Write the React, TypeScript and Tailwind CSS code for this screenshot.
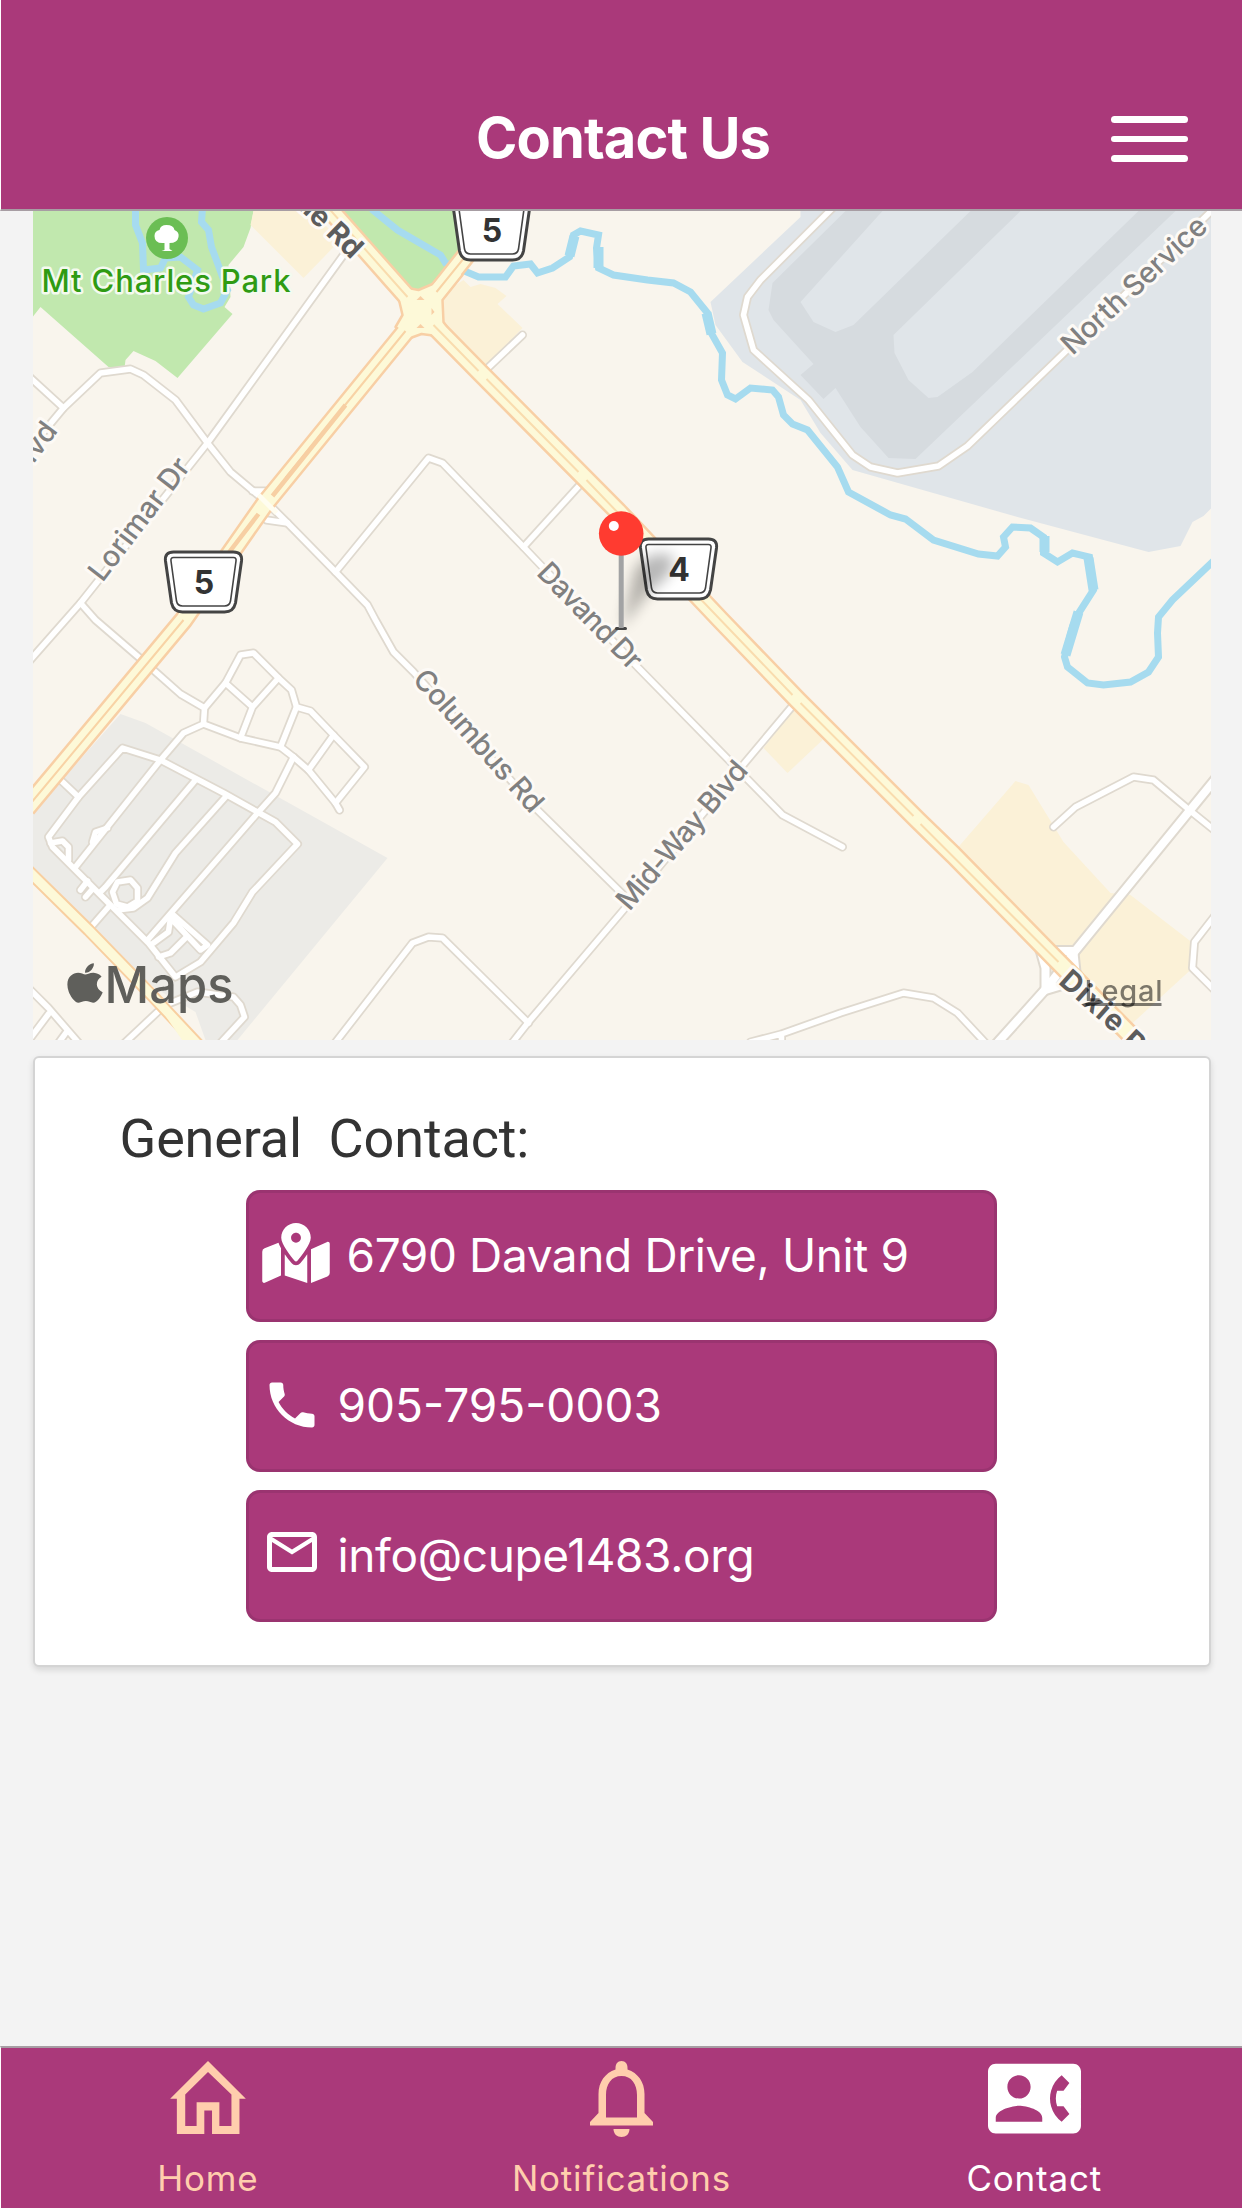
import React from "react";
import { FaApple, FaMapMarkedAlt } from "react-icons/fa";
import { MdContactPhone, MdMailOutline, MdPhone } from "react-icons/md";

const streets = [
  "M343 255L207 443L80 603L28 662",
  "M28 376L63 408",
  "M28 450L63 408L100 373L130 369L143 375L175 400L207 443L230 472L267 503L287 523L335 572L367 605L375 620L393 652L413 672L537 810L623 895",
  "M252 491L272 491",
  "M266 520L287 523",
  "M335 572L428 458L442 463L523 547L638 668L738 770L782 815L842 847",
  "M523 547L582 482",
  "M482 373L522 335",
  "M797 700L740 768L623 910L528 1022L510 1045",
  "M333 1045L412 943L428 937L442 938L528 1023",
  "M80 603L95 620L145 663L180 694L204 708L203 724L183 733L160 760L75 867",
  "M204 708L225 683L240 655L253 653L278 678L291 690L296 707L310 711L333 735L364 767L335 803L339 810",
  "M203 724L240 738L280 747L293 757L308 770L335 803",
  "M225 683L252 707L240 738M252 707L278 678M296 707L280 747M333 735L308 770",
  "M293 757L275 793L258 812L173 910L147 940",
  "M48 837L78 797L122 748L160 760L223 793L257 812L275 822L297 844L252 892L233 923L200 962L175 977L148 943L100 895L52 847Z",
  "M60 780L78 797",
  "M195 780L105 887L100 892",
  "M225 797L175 853L147 898L133 908L117 910",
  "M117 882L130 880L137 888L137 901L127 907L116 904L112 892Z",
  "M108 907L88 930",
  "M50 843L62 841L68 847L68 860",
  "M92 842L95 832L107 828",
  "M80 890L87 881M85 897L92 889",
  "M173 915L207 945L200 950L170 918L168 932L153 943",
  "M185 938L170 953L158 957",
  "M170 1003L197 992L233 997L240 1005L244 1017L220 1043",
  "M123 1044L157 1012",
  "M28 988L48 1008L80 1045M30 1038L48 1014M58 1043L66 1032",
  "M750 1042L781 1034L840 1013L903 993L933 998L957 1013L985 1043M781 1034L781 1045",
  "M832 208L760 280L747 297L743 315L753 350L808 400L852 455L870 467L897 473L938 466L967 446L1213 209",
  "M1053 827L1075 807L1133 777L1153 780L1190 811L1215 831",
  "M1215 915L1194 942L1192 968L1215 991",
];

const avenues = [
  "M995 1045L1047 987L1073 953L1215 779",
  "M1040 951L1073 951M1040 950L1045 968L1045 990L1065 984",
  "M1073 953L1075 972L1083 985",
];

const highways = [
  "M26 808L183 620L265 503L420 313L500 212",
  "M328 208L420 312L480 373L617 511L720 620L797 700L917 820L953 855L1053 957L1140 1045",
];

const Label = ({
  x,
  y,
  r,
  len,
  children,
  bold = false,
  anchor = "start",
}: {
  x: number;
  y: number;
  r: number;
  len?: number;
  children: string;
  bold?: boolean;
  anchor?: "start" | "end";
}) => (
  <text
    transform={`translate(${x} ${y}) rotate(${r})`}
    textLength={len}
    textAnchor={anchor}
    fontSize={29}
    fontWeight={bold ? 700 : 450}
    fill={bold ? "#5c5c5c" : "#808080"}
    stroke="#fdfaf6"
    strokeWidth={6}
    strokeLinejoin="round"
    paintOrder="stroke"
  >
    {children}
  </text>
);

const Shield = ({ x, y, n }: { x: number; y: number; n: string }) => (
  <g transform={`translate(${x} ${y})`}>
    <path
      d="M-30 -30H30Q39 -30 38 -21L32 21Q30 30 21 30H-21Q-30 30 -32 21L-38 -21Q-39 -30 -30 -30Z"
      fill="#fff"
      stroke="#444"
      strokeWidth="3"
    />
    <path
      d="M-30 -24.500H30Q33 -24.500 32.500 -21L27 19Q26 24 21 24H-21Q-26 24 -27 19L-32.500 -21Q-33 -24.500 -30 -24.500Z"
      fill="none"
      stroke="#444"
      strokeWidth="1.6"
    />
    <text x="0.500" y="11.500" textAnchor="middle" fontSize="32" fontWeight="700" fill="#333">
      {n}
    </text>
  </g>
);

function MapView() {
  return (
    <svg
      className="block h-[829px] w-[1178px] shrink-0 font-['Inter',sans-serif]"
      viewBox="32.5 211 1178 829"
    >
      <defs>
        <filter id="pinShadow" x="-50%" y="-50%" width="200%" height="200%">
          <feGaussianBlur stdDeviation="7" />
        </filter>
      </defs>
      <rect x="32" y="211" width="1180" height="829" fill="#f9f5ed" />

      {/* parks */}
      <g fill="#c1e8ae">
        <path d="M32 211H253L250 228L243 247L228 265L230 297L224 307L232 314L177 378L155 361L133 351L125 360L124 368L108 367L40 307L32 317Z" />
        <path d="M335 205L408 288L418 290L435 283L465 245V205Z" />
      </g>

      {/* commercial blocks */}
      <g fill="#fbf1d7">
        <path d="M253 211L250 225L303 278L340 240L310 211Z" />
        <path d="M463 280L470 287L480 284L495 288L506 296L497 304L522 328L485 367L440 325L440 295Z" />
        <path d="M797 705L763 748L787 773L822 740Z" />
        <path d="M1015 781L1028 785L1063 842L1110 893L1130 895L1191 942L1190 970L1130 1025L1053 948L957 848Z" />
      </g>
      <path d="M120 714L145 723L387 858L237 1040H205L195 1012L153 987L32 870V813Z" fill="#ecebe7" />

      {/* airport */}
      <path
        d="M800 211V217L710 302L715 325L742 362L800 400L820 433L852 470L1017 517L1148 552L1180 546L1192 522L1203 516L1211 508V211Z"
        fill="#e0e5e9"
      />
      <path
        fillRule="evenodd"
        fill="#d6dbdf"
        d="M845 211L772 283L768 310L773 320L813 364L800 375L823 399L835 388L860 427L888 458L915 459L1175 211ZM882 211L800 302L813 322L835 332L853 325L970 211ZM1020 211L893 335L894 353L908 380L928 398L937 397L972 372L1138 211Z"
      />

      {/* water */}
      <g fill="none" stroke="#a6dbef" strokeWidth="7">
        <path d="M135 208L135 225L142 243L143 270L160 268L165 258L180 257L197 270L188 297L193 305L203 309L220 303L227 290L217 263L211 247L208 230L201 222L202 208" />
        <path d="M371 209L397 230L440 255L445 263L478 277L505 277L513 266L530 264L537 273L552 268L569 257L573 235L580 231L598 235L596 248L598 268L613 275L647 280L673 283L690 292L707 313L709 330L722 353L721 380L727 395L735 399L750 388L772 390L778 397L783 415L792 424L807 430L837 467L848 492L890 515L905 519L933 540L978 554L997 556L1005 547L1003 537L1012 527L1030 528L1043 537L1043 553L1057 562L1072 553L1089 557L1093 590L1077 615L1072 627L1064 657L1067 667L1087 683L1103 685L1130 682L1148 672L1158 657L1157 633L1158 617L1172 600L1214 560" />
        <path d="M574 236L569 256M598 247L598 268M706 313L711 334M1088 558L1093 590M1078 612L1065 655M1044 536V552" strokeWidth="10" />
      </g>

      {/* streets */}
      <g fill="none" strokeLinejoin="round" strokeLinecap="round">
        <g stroke="#dfd9cf" strokeWidth="9">
          {streets.map((d) => (
            <path key={d} d={d} />
          ))}
        </g>
        <g stroke="#dfd9cf" strokeWidth="12">
          {avenues.map((d) => (
            <path key={d} d={d} />
          ))}
        </g>
        <g stroke="#fff" strokeWidth="5.500">
          {streets.map((d) => (
            <path key={d} d={d} />
          ))}
        </g>
        <g stroke="#fff" strokeWidth="8">
          {avenues.map((d) => (
            <path key={d} d={d} />
          ))}
        </g>
      </g>

      {/* highways */}
      <g fill="none" strokeLinejoin="round">
        <path d="M26 869L88 930L153 997L198 1045" stroke="#f8cfa0" strokeWidth="13" />
        <path d="M26 869L88 930L153 997L198 1045" stroke="#fdf9d8" strokeWidth="9" />
        <path d="M150 994L185 1045L200 1045Z" fill="#fdf9d8" />
        <g stroke="#f8cfa5" strokeWidth="20">
          {highways.map((d) => (
            <path key={d} d={d} />
          ))}
        </g>
        <path
          d="M397 278L408 288L418 290L432 284L455 258L462 275L442 300L443 322L452 335L436 336L421 334L410 338L395 327L402 315L398 298L382 282Z"
          stroke="#f8cfa5"
          strokeWidth="2.500"
          fill="#fdf9d8"
        />
        <g stroke="#fdf9d8" strokeWidth="15">
          {highways.map((d) => (
            <path key={d} d={d} />
          ))}
        </g>
        <path d="M28 806L183 620M285 478L405 331M436 292L470 250" stroke="#f8d3a5" strokeWidth="2" />
        <path d="M215 570L258 514M272 496L345 405" stroke="#f7cfa3" strokeWidth="4.500" />
        <path d="M328 208L407 297M433 325L478 371M486 379L578 472M586 480L792 695M800 703L913 816M920 824L1058 962" stroke="#f9dcae" strokeWidth="2" />
        <path d="M416 300L420 296L424 300ZM416 328L420 324L424 328ZM431 308L434 312L431 315Z" fill="#f8cfa5" />
        <path d="M258 495L276 513" stroke="#fffdf0" strokeWidth="5" />
      </g>

      {/* street names */}
      <Label x={102} y={583} r={-52.5} len={146}>Lorimar Dr</Label>
      <Label x={535} y={574} r={45.8} len={136}>Davand Dr</Label>
      <Label x={411} y={680} r={48.4} len={180}>Columbus Rd</Label>
      <Label x={629} y={912} r={-49.6} len={185}>Mid-Way Blvd</Label>
      <Label x={1072} y={356} r={-43} len={187}>North Service</Label>
      <Label x={58} y={431} r={-53} anchor="end">Blvd</Label>
      <Label x={351} y={260} r={44} anchor="end" bold>Dixie Rd</Label>
      <Label x={1057} y={983} r={41.5} len={76} bold>Dixie</Label>
      <Label x={1120} y={1043} r={43} bold>Rd</Label>

      {/* park marker */}
      <circle cx="166.500" cy="238" r="21" fill="#6bbe54" />
      <path
        d="M164 250V243Q154 244 154 236Q154 231 159 230Q160 225 166 225Q173 225 174 230Q179 232 178 237Q177 243 169 243V249L172 251H161Z"
        fill="#fff"
      />
      <text
        x="41"
        y="291.500"
        textLength="249"
        fontSize="31"
        fontWeight="550"
        fill="#2f9b13"
        stroke="#f4faef"
        strokeWidth="5"
        strokeLinejoin="round"
        paintOrder="stroke"
      >
        Mt Charles Park
      </text>

      <Shield x={203} y={582} n="5" />
      <Shield x={491} y={230} n="5" />
      <Shield x={678} y={569} n="4" />

      {/* pin */}
      <path d="M621 628L634 570Q650 548 672 556Q676 575 650 590Z" fill="#000" opacity=".28" filter="url(#pinShadow)" />
      <path d="M616 628.500H625" stroke="#444" strokeWidth="3" strokeLinecap="round" />
      <rect x="618.200" y="550" width="5" height="78" fill="#a2a3a4" />
      <circle cx="620.700" cy="533.500" r="22.300" fill="#ff3b30" />
      <circle cx="613.300" cy="526" r="5" fill="#fff" />

      {/* attribution */}
      <g transform="translate(66.5 960.5)">
        <FaApple size={45} color="#5f5f5b" preserveAspectRatio="none" style={{ width: 36 }} />
      </g>
      <text
        x="104"
        y="1003"
        textLength="129"
        lengthAdjust="spacingAndGlyphs"
        fontSize="51"
        fontWeight="500"
        fill="#5f5f5b"
      >
        Maps
      </text>
      <text x="1084" y="1001" textLength="78" fontSize="29" fontWeight="550" fill="#000" opacity=".5">
        Legal
      </text>
      <path d="M1085 1004.500H1161" stroke="#000" opacity=".5" strokeWidth="3" />
    </svg>
  );
}

function ContactButton({
  icon,
  children,
  gap,
  text,
}: {
  icon: React.ReactNode;
  children: string;
  gap: string;
  text: string;
}) {
  return (
    <button
      className={`flex h-[132px] w-[751px] items-center rounded-[14px] border-[3px] border-[#9a3470] bg-[#aa397a] pl-[13px] text-[46px] leading-none text-white ${gap}`}
    >
      {icon}
      <span className={`-mt-[2px] whitespace-nowrap ${text}`}>{children}</span>
    </button>
  );
}

const HomeIcon = () => (
  <svg className="h-[73px] w-[76px]" viewBox="510 93 226 218" fill="#ffcead">
    <path d="M623 93L736 206H717V311H635V241H612V311H530V206H510ZM623 126L555 193V287H589V216H657V287H693V193Z" />
  </svg>
);

const BellIcon = () => (
  <svg className="h-[76px] w-[63px]" viewBox="0 0 63 76" fill="#ffcead">
    <path
      fillRule="evenodd"
      d="M31.500 0C35.500 0 37.500 3 37.500 7V8.500C48 12 54.500 21 54.500 33V52L63 61V64.500H0V61L8.500 52V33C8.500 21 15 12 25.500 8.500V7C25.500 3 27.500 0 31.500 0ZM31.500 15C21.500 15 16 23 16 34V56.500H47V34C47 23 41.500 15 31.500 15Z"
    />
    <path d="M23.500 68H39.500C39.500 73 36 76 31.500 76S23.500 73 23.500 68Z" />
  </svg>
);

export default function App() {
  return (
    <div className="flex h-[2208px] w-[1242px] flex-col overflow-hidden bg-[#f3f3f3] font-['Inter',sans-serif]">
      <header className="relative flex h-[211px] shrink-0 items-end justify-center border-b-2 border-l border-b-[#a79da3] border-l-white bg-[#aa397a] pb-[37px] pl-[3px]">
        <h1 className="text-[56px] leading-[68px] font-bold tracking-[-0.9px] text-white">Contact Us</h1>
        <button className="absolute top-[116px] right-[54px] flex w-[77px] flex-col gap-[13px]" aria-label="Menu">
          <span className="h-[6.5px] rounded-full bg-white" />
          <span className="h-[6.5px] rounded-full bg-white" />
          <span className="h-[6.5px] rounded-full bg-white" />
        </button>
      </header>

      <main className="flex flex-1 flex-col pl-[32.5px]">
        <MapView />
        <section className="mt-4 flex h-[611px] w-[1178px] flex-col items-center rounded-[6px] border-2 border-[#d4d4d4] bg-white pt-[48px] shadow-[0_3px_6px_rgba(0,0,0,0.12)]">
          <h2 className="w-full pl-[85px] font-['Roboto',sans-serif] text-[54px] leading-[66px] tracking-[-0.15px] whitespace-pre text-[#333]">
            General{"  "}Contact:
          </h2>
          <div className="mt-[18px] mr-[1px] flex flex-col gap-[18px]">
            <ContactButton
              gap="gap-[17px]"
              text="tracking-[-0.4px]"
              icon={<FaMapMarkedAlt className="-mt-[6px] h-[60px] w-[68px]" />}
            >
              6790 Davand Drive, Unit 9
            </ContactButton>
            <ContactButton gap="gap-4" text="tracking-normal" icon={<MdPhone className="-mt-[3px] size-[60px]" />}>
              905-795-0003
            </ContactButton>
            <ContactButton
              gap="gap-4"
              text="tracking-[-0.35px]"
              icon={<MdMailOutline className="-mt-2 size-[60px]" />}
            >
              info@cupe1483.org
            </ContactButton>
          </div>
        </section>
      </main>

      <nav className="grid h-[162px] shrink-0 grid-cols-3 border-t-2 border-l border-t-[#a79da3] border-l-white bg-[#aa397a] text-[35px] leading-[42px] text-[#ffcead]">
        <a className="flex flex-col items-center pt-[13px]">
          <HomeIcon />
          <span className="mt-[23px] tracking-[0.8px]">Home</span>
        </a>
        <a className="flex flex-col items-center pt-[13px]">
          <BellIcon />
          <span className="mt-[20px] tracking-[0.8px]">Notifications</span>
        </a>
        <a className="flex flex-col items-center pr-[2px] text-white">
          <MdContactPhone className="mt-[4px] size-[93px]" />
          <span className="mt-[12px] tracking-[0.8px]">Contact</span>
        </a>
      </nav>
    </div>
  );
}
